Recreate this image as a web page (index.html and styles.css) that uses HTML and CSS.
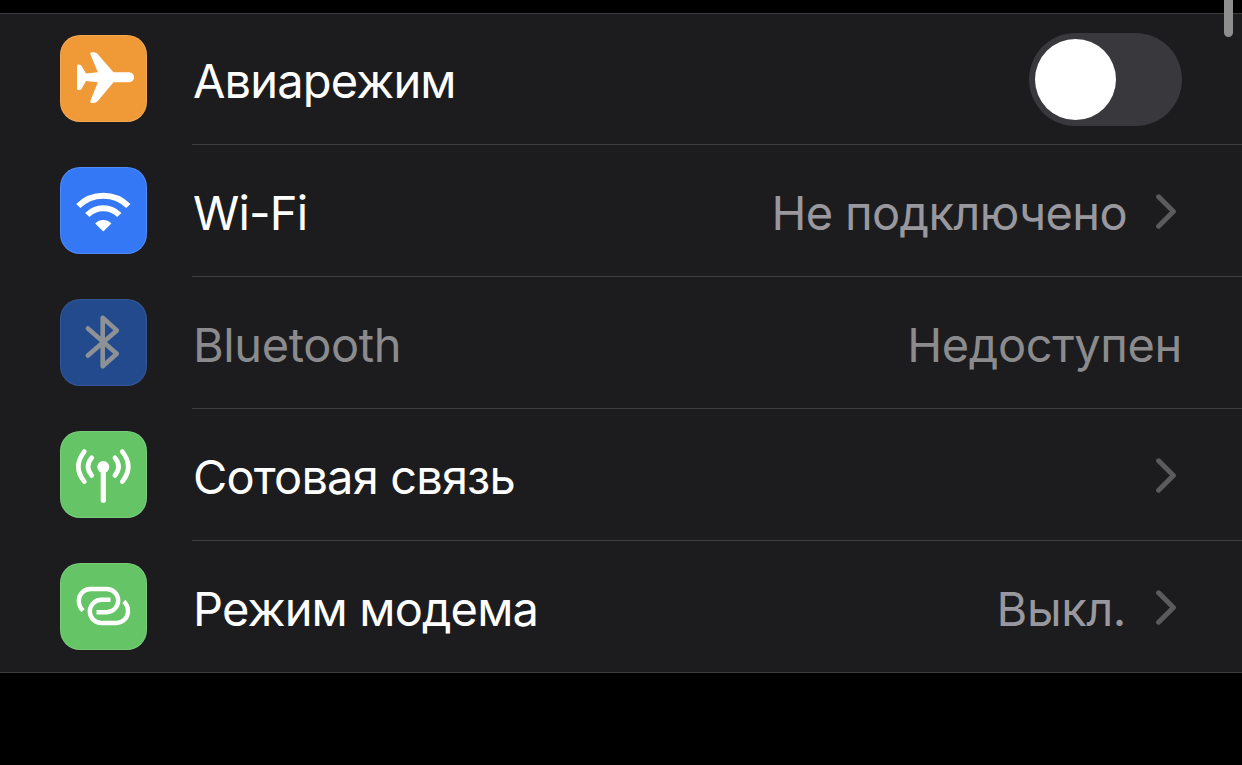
FILE: index.html
```html
<!DOCTYPE html>
<html lang="ru">
<head>
    <meta charset="UTF-8">
    <meta name="viewport" content="width=device-width, initial-scale=1.0">
    <title>Настройки</title>
    <link rel="stylesheet" href="styles.css">
</head>
<body>
    <div class="scrollbar"></div>

    <ul class="settings">
        <li class="row">
            <svg class="icon icon-orange" viewBox="0 0 87 87">
                <path fill="#fff" d="M53.5 37.3H68.5C72 37.3 74 39.6 74 42.3S72 47.3 68.5 47.3H53.5L37.8 66Q36.2 68 33.8 68H31.5Q29.8 68 30.4 66L37.8 47.3L26 46L21.8 53.4Q20.9 55 19 55H18.3Q17 55 17 53.6V31Q17 29.6 18.3 29.6H19Q20.9 29.6 21.8 31.2L26 38.6L37.8 37.3L30.4 19.3Q29.8 17.2 31.5 17.2H33.8Q36.2 17.2 37.8 19.2Z"/>
            </svg>
            <div class="row-body">
                <span class="label">Авиарежим</span>
                <span class="toggle"><span class="knob"></span></span>
            </div>
        </li>

        <li class="row">
            <svg class="icon icon-blue" viewBox="0 0 87 87">
                <g fill="none" stroke="#fff" stroke-width="6">
                    <path d="M18.3 39A35.4 35.4 0 0 1 68.3 39"/>
                    <path d="M27.3 48A22.6 22.6 0 0 1 59.3 48"/>
                </g>
                <path fill="#fff" d="M43.3 64.5L35.2 56.4A11.5 11.5 0 0 1 51.4 56.4Z"/>
            </svg>
            <div class="row-body">
                <span class="label">Wi-Fi</span>
                <span class="value">Не подключено</span>
                <svg class="chevron" viewBox="0 0 20 35"><path d="M2.6 2.8L17.4 17.5L2.6 32.2"/></svg>
            </div>
        </li>

        <li class="row disabled">
            <svg class="icon icon-navy" viewBox="0 0 87 87">
                <path fill="none" stroke="#8e9296" stroke-width="4.6" stroke-linecap="round" stroke-linejoin="round" d="M27.9 29.5L56.8 54.7L42.7 67.3V18.8L56.8 31.4L27.9 56.6"/>
            </svg>
            <div class="row-body">
                <span class="label">Bluetooth</span>
                <span class="value">Недоступен</span>
            </div>
        </li>

        <li class="row">
            <svg class="icon icon-green" viewBox="0 0 87 87">
                <circle cx="43.3" cy="36" r="6" fill="#fff"/>
                <g fill="none" stroke="#fff" stroke-width="4.7" stroke-linecap="round">
                    <path stroke-width="5.2" d="M43.3 36V69.2"/>
                    <path d="M31.7 26.8Q24.4 35.6 31.7 44.4"/>
                    <path d="M24.3 20.6Q12.4 35.6 24.3 50.6"/>
                    <path d="M54.9 26.8Q62.2 35.6 54.9 44.4"/>
                    <path d="M62.3 20.6Q74.2 35.6 62.3 50.6"/>
                </g>
            </svg>
            <div class="row-body">
                <span class="label">Сотовая связь</span>
                <svg class="chevron" viewBox="0 0 20 35"><path d="M2.6 2.8L17.4 17.5L2.6 32.2"/></svg>
            </div>
        </li>

        <li class="row">
            <svg class="icon icon-green" viewBox="0 0 87 87">
                <g fill="none" stroke="#fff" stroke-width="4.4">
                    <path d="M23 47.6Q18.8 43.5 18.8 37.8A11.6 11.8 0 0 1 30.4 26H46.6A11.6 11.6 0 0 1 46.6 49.2H36.5"/>
                    <path d="M63.8 38.4Q68 42.5 68 48.2A11.6 11.8 0 0 1 56.4 60H41.4A11.6 11.6 0 0 1 41.4 36.8H50.5"/>
                </g>
            </svg>
            <div class="row-body">
                <span class="label">Режим модема</span>
                <span class="value value-short">Выкл.</span>
                <svg class="chevron" viewBox="0 0 20 35"><path d="M2.6 2.8L17.4 17.5L2.6 32.2"/></svg>
            </div>
        </li>
    </ul>
</body>
</html>
```
FILE: styles.css
```css
* {
    margin: 0;
    padding: 0;
    box-sizing: border-box;
}

body {
    height: 765px;
    padding-top: 13px;
    background: #000;
    color: #fff;
    font-family: Inter, "Liberation Sans", sans-serif;
    font-size: 47px;
    line-height: 56px;
    overflow: hidden;
}

/* Settings list */
.settings {
    list-style: none;
    background: #1c1c1e;
    box-shadow: inset 0 1px #3d3d40, inset 0 -1px #3d3d40;
}

.row {
    display: flex;
    height: 132px;
    padding-left: 60px;
}

.row-body {
    display: flex;
    flex: 1;
    align-items: center;
    margin-left: 45px;
    padding: 5px 60px 0 1px;
    border-bottom: 1px solid #3d3d40;
}

.label {
    flex: 1;
    letter-spacing: -0.85px;
    white-space: nowrap;
}

.value {
    color: #98989e;
    letter-spacing: -0.65px;
    white-space: nowrap;
}

.value-short {
    margin-right: 1px;
    letter-spacing: -0.4px;
}

.disabled .label,
.disabled .value {
    color: #8b8b8d;
    letter-spacing: -0.4px;
}

/* Icons */
.icon {
    width: 87px;
    height: 87px;
    margin-top: 22px;
    border-radius: 20px;
    box-shadow: inset 0 0 0 1px rgba(255, 255, 255, 0.14);
}

.icon-orange {
    background: #f09a37;
}

.icon-blue {
    background: #3478f6;
}

.icon-navy {
    background: #224a8c;
    box-shadow: inset 0 0 0 1px rgba(255, 255, 255, 0.08);
}

.icon-green {
    background: #65c466;
}

.chevron {
    width: 20px;
    height: 35px;
    margin: 0 6px 4px 29px;
    fill: none;
    stroke: #5b5b5e;
    stroke-width: 5;
    stroke-linecap: round;
    stroke-linejoin: round;
}

/* Switch */
.toggle {
    width: 153px;
    height: 93px;
    margin-bottom: 4px;
    padding: 6px;
    border-radius: 47px;
    background: #39393d;
}

.knob {
    display: block;
    width: 81px;
    height: 81px;
    border-radius: 50%;
    background: #fff;
}

.scrollbar {
    position: absolute;
    top: -10px;
    right: 9px;
    width: 9px;
    height: 47px;
    border-radius: 5px;
    background: #8e8e8f;
}
```
